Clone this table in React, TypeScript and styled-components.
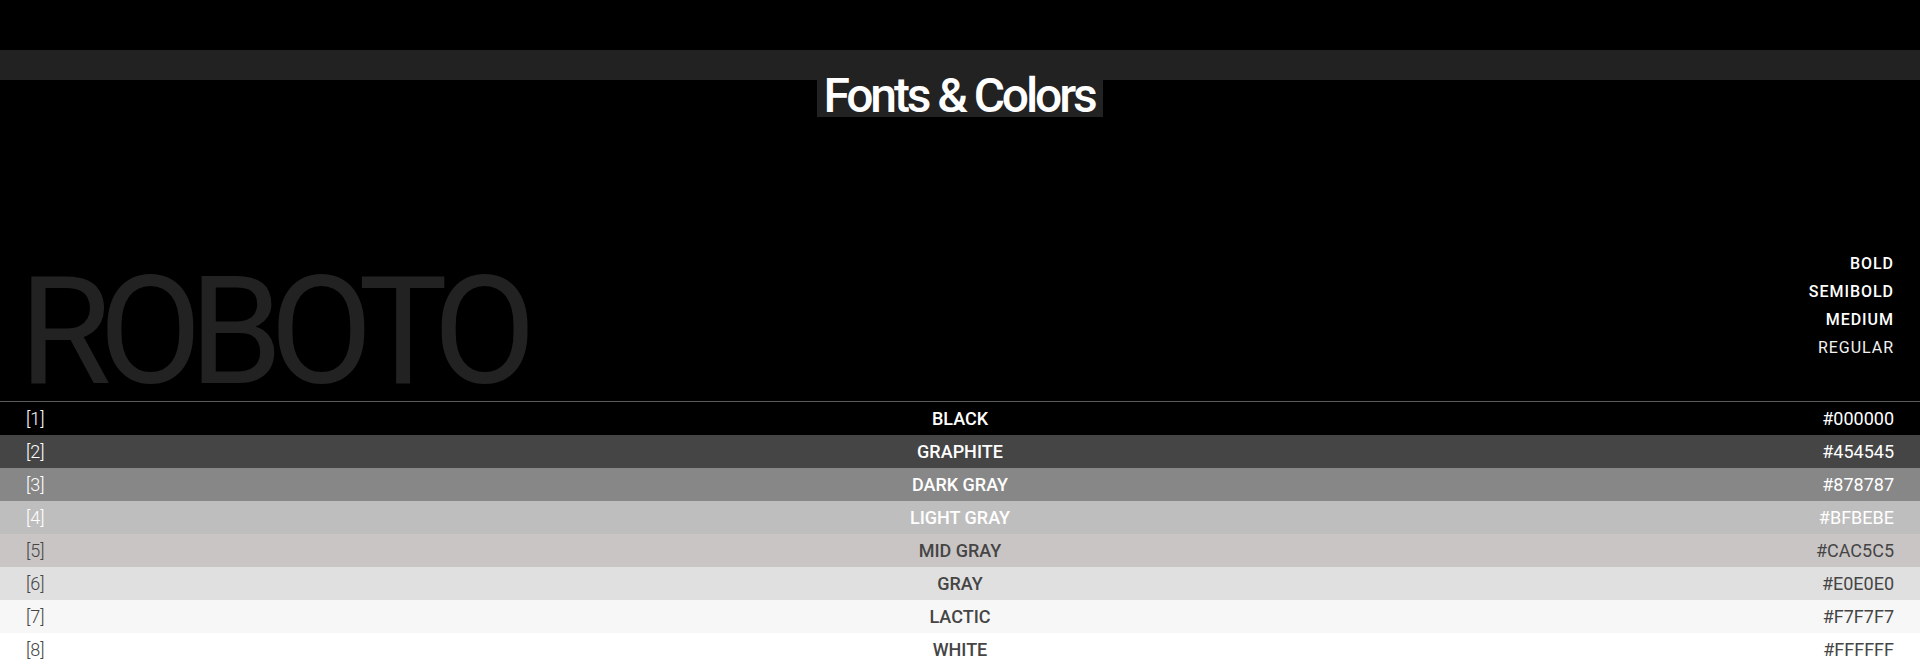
import styled, { createGlobalStyle } from "styled-components";

const GlobalStyle = createGlobalStyle`
  html, body {
    margin: 0;
    padding: 0;
    background: #000;
  }
  body {
    font-family: Roboto, "Noto Sans", Arial, sans-serif;
  }
`;

interface Swatch {
  name: string;
  hex: string;
  dark: boolean;
}

const swatches: Swatch[] = [
  { name: "BLACK", hex: "#000000", dark: false },
  { name: "GRAPHITE", hex: "#454545", dark: false },
  { name: "DARK GRAY", hex: "#878787", dark: false },
  { name: "LIGHT GRAY", hex: "#BFBEBE", dark: false },
  { name: "MID GRAY", hex: "#CAC5C5", dark: true },
  { name: "GRAY", hex: "#E0E0E0", dark: true },
  { name: "LACTIC", hex: "#F7F7F7", dark: true },
  { name: "WHITE", hex: "#FFFFFF", dark: true },
];

const weights = [
  { label: "BOLD", weight: 500 },
  { label: "SEMIBOLD", weight: 500 },
  { label: "MEDIUM", weight: 500 },
  { label: "REGULAR", weight: 400 },
];

export default function App() {
  return (
    <Page>
      <GlobalStyle />
      <Band />
      <TitleRow>
        <Title>Fonts &amp; Colors</Title>
      </TitleRow>
      <Hero>
        <FontName>ROBOTO</FontName>
        <WeightList>
          {weights.map((w) => (
            <WeightItem key={w.label} weight={w.weight}>
              {w.label}
            </WeightItem>
          ))}
        </WeightList>
      </Hero>
      <Palette>
        {swatches.map((s, i) => (
          <SwatchRow key={s.hex} bg={s.hex} dark={s.dark}>
            <Index>{`[${i + 1}]`}</Index>
            <ColorName>{s.name}</ColorName>
            <Hex>{s.hex}</Hex>
          </SwatchRow>
        ))}
      </Palette>
    </Page>
  );
}

const Page = styled.div`
  display: flex;
  flex-direction: column;
  width: 100%;
  height: 666px;
  padding-top: 50px;
  box-sizing: border-box;
  background: #000;
  overflow: hidden;
`;

const Band = styled.div`
  height: 30px;
  background: #222;
`;

const TitleRow = styled.div`
  display: flex;
  justify-content: center;
`;

const Title = styled.h1`
  margin: 0;
  height: 37px;
  padding: 0 8px 0 6px;
  background: #222;
  color: #fff;
  font-size: 48px;
  font-weight: 500;
  line-height: 31px;
  letter-spacing: -0.065em;
  white-space: nowrap;
`;

const Hero = styled.div`
  flex: 1;
  display: flex;
  justify-content: space-between;
  align-items: flex-end;
  padding: 0 26px 0 19px;
  border-bottom: 1px solid #5c5c5c;
`;

const FontName = styled.div`
  color: #222;
  font-size: 150px;
  font-weight: 400;
  line-height: 120px;
  letter-spacing: -0.085em;
  margin-bottom: 9px;
`;

const WeightList = styled.div`
  display: flex;
  flex-direction: column;
  align-items: flex-end;
  margin-bottom: 39px;
`;

const WeightItem = styled.div<{ weight: number }>`
  color: ${(p) => (p.weight === 400 ? "#f2f2f2" : "#fff")};
  font-size: 16px;
  line-height: 28px;
  letter-spacing: 0.06em;
  font-weight: ${(p) => p.weight};
`;

const Palette = styled.div`
  display: flex;
  flex-direction: column;
`;

const SwatchRow = styled.div<{ bg: string; dark: boolean }>`
  display: grid;
  grid-template-columns: 1fr auto 1fr;
  align-items: center;
  height: 33px;
  padding: 0 26px;
  background: ${(p) => p.bg};
  color: ${(p) => (p.dark ? "#454545" : "#fff")};
  font-size: 18px;
`;

const Index = styled.span`
  font-weight: 300;
`;

const ColorName = styled.span`
  font-weight: 500;
  text-align: center;
`;

const Hex = styled.span`
  font-weight: 400;
  text-align: right;
`;
